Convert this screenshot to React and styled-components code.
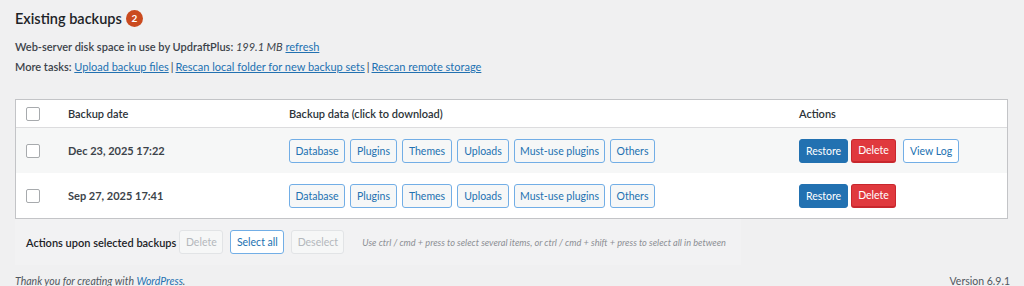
import styled, { createGlobalStyle } from "styled-components";

const Global = createGlobalStyle`
  body {
    margin: 0;
    background: #f0f0f1;
    font-family: Lato, "Open Sans", sans-serif;
    color: #1d2327;
  }
`;

const Page = styled.div`
  width: 1024px;
  height: 286px;
  overflow: hidden;
  padding: 0 14px 0 15px;
  box-sizing: border-box;
`;

const Title = styled.h2`
  margin: 0;
  padding-top: 6px;
  height: 30px;
  box-sizing: border-box;
  display: flex;
  align-items: center;
  gap: 4px;
  font-size: 14.5px;
  font-weight: 600;
  color: #1d2327;
`;

const Badge = styled.span`
  width: 17px;
  height: 17px;
  border-radius: 50%;
  background: #ca4a1f;
  color: #fff;
  font-size: 10px;
  font-weight: 700;
  display: inline-flex;
  align-items: center;
  justify-content: center;
`;

const Info = styled.div`
  margin-top: 7px;
  display: flex;
  flex-direction: column;
  font-size: 11px;
  line-height: 20px;
  font-weight: 600;
  color: #3c434a;

  em {
    font-weight: 400;
  }
`;

const Link = styled.a`
  color: #2271b1;
  font-weight: 400;
  text-decoration: underline;
  cursor: pointer;
`;

const Sep = styled.span`
  font-weight: 400;
  margin: 0 2px;
`;

const Table = styled.div`
  margin-top: 22px;
  border: 1px solid #c3c4c7;
  background: #fff;
  width: 993px;
  box-sizing: border-box;
`;

const Row = styled.div`
  display: grid;
  grid-template-columns: 52px 221px 510px 1fr;
  align-items: center;
  box-sizing: border-box;
  height: ${(p) => (p.$head ? "28px" : "45px")};
  background: ${(p) => (p.$alt ? "#f6f7f7" : "#fff")};
  border-bottom: ${(p) => (p.$head ? "1px solid #dcdcde" : "none")};
  font-size: 11px;
  color: #1d2327;
`;

const CheckCell = styled.div`
  padding-left: 10px;
  display: flex;
`;

const Check = styled.span`
  width: 12px;
  height: 12px;
  border: 1px solid #a7aaad;
  border-radius: 2px;
  background: #fff;
  display: block;
`;

const HeadText = styled.div`
  font-weight: 600;
  color: #2c3338;
`;

const DateText = styled.div`
  font-weight: 700;
  color: #3c434a;
`;

const Buttons = styled.div`
  display: flex;
  gap: ${(p) => p.$gap || "5px"};
  align-items: center;
`;

const Btn = styled.button`
  height: 24px;
  width: ${(p) => p.$w}px;
  padding: 0;
  font-family: inherit;
  font-size: 10.5px;
  border-radius: 3px;
  cursor: pointer;
  box-sizing: border-box;
  border: 1px solid #72aee6;
  background: #f6f7f7;
  color: #2271b1;
  white-space: nowrap;
`;

const Primary = styled(Btn)`
  background: #2271b1;
  border-color: #2271b1;
  color: #fff;
`;

const Danger = styled(Btn)`
  background: #e0393e;
  border-color: #c8272d;
  border-bottom-width: 2px;
  color: #fff;
`;

const Disabled = styled(Btn)`
  border-color: #e2e4e6;
  background: #f6f7f7;
  color: #b4b8bc;
`;

const Outline = styled(Btn)`
  background: #fff;
  border-color: #72aee6;
  margin-left: ${(p) => p.$ml || 0}px;
`;

const BulkBar = styled.div`
  width: 726px;
  height: 46px;
  background: #f2f2f3;
  display: flex;
  align-items: center;
  padding-left: 11px;
  box-sizing: border-box;
  gap: 7px;
  white-space: nowrap;
`;

const BulkLabel = styled.span`
  font-size: 11px;
  font-weight: 600;
  color: #1d2327;
  margin-right: -4px;
`;

const Hint = styled.em`
  font-size: 9.2px;
  color: #8c8f94;
  margin-left: 11px;
`;

const Footer = styled.div`
  margin-top: 9px;
  display: flex;
  justify-content: space-between;
  font-size: 10.5px;
  line-height: 15px;
  color: #50575e;
`;

const dataTypes = [
  ["Database", 56],
  ["Plugins", 47],
  ["Themes", 50],
  ["Uploads", 52],
  ["Must-use plugins", 91],
  ["Others", 45],
];

const backups = [
  { date: "Dec 23, 2025 17:22", log: true },
  { date: "Sep 27, 2025 17:41", log: false },
];

export default function App() {
  return (
    <Page>
      <Global />
      <Title>
        Existing backups <Badge>2</Badge>
      </Title>
      <Info>
        <div>
          Web-server disk space in use by UpdraftPlus: <em>199.1 MB</em> <Link>refresh</Link>
        </div>
        <div>
          More tasks: <Link>Upload backup files</Link>
          <Sep>|</Sep>
          <Link>Rescan local folder for new backup sets</Link>
          <Sep>|</Sep>
          <Link>Rescan remote storage</Link>
        </div>
      </Info>
      <Table>
        <Row $head>
          <CheckCell>
            <Check />
          </CheckCell>
          <HeadText>Backup date</HeadText>
          <HeadText>Backup data (click to download)</HeadText>
          <HeadText>Actions</HeadText>
        </Row>
        {backups.map((b, i) => (
          <Row key={b.date} $alt={i % 2 === 0}>
            <CheckCell>
              <Check />
            </CheckCell>
            <DateText>{b.date}</DateText>
            <Buttons>
              {dataTypes.map(([t, w]) => (
                <Btn key={t} $w={w}>
                  {t}
                </Btn>
              ))}
            </Buttons>
            <Buttons $gap="3px">
              <Primary $w={49}>Restore</Primary>
              <Danger $w={45}>Delete</Danger>
              {b.log && (
                <Outline $w={56} $ml={4}>
                  View Log
                </Outline>
              )}
            </Buttons>
          </Row>
        ))}
      </Table>
      <BulkBar>
        <BulkLabel>Actions upon selected backups</BulkLabel>
        <Disabled $w={44}>Delete</Disabled>
        <Outline $w={54}>Select all</Outline>
        <Disabled $w={53}>Deselect</Disabled>
        <Hint>
          Use ctrl / cmd + press to select several items, or ctrl / cmd + shift + press to select all in between
        </Hint>
      </BulkBar>
      <Footer>
        <em>
          Thank you for creating with <Link style={{ textDecoration: "none" }}>WordPress</Link>.
        </em>
        <span>Version 6.9.1</span>
      </Footer>
    </Page>
  );
}
